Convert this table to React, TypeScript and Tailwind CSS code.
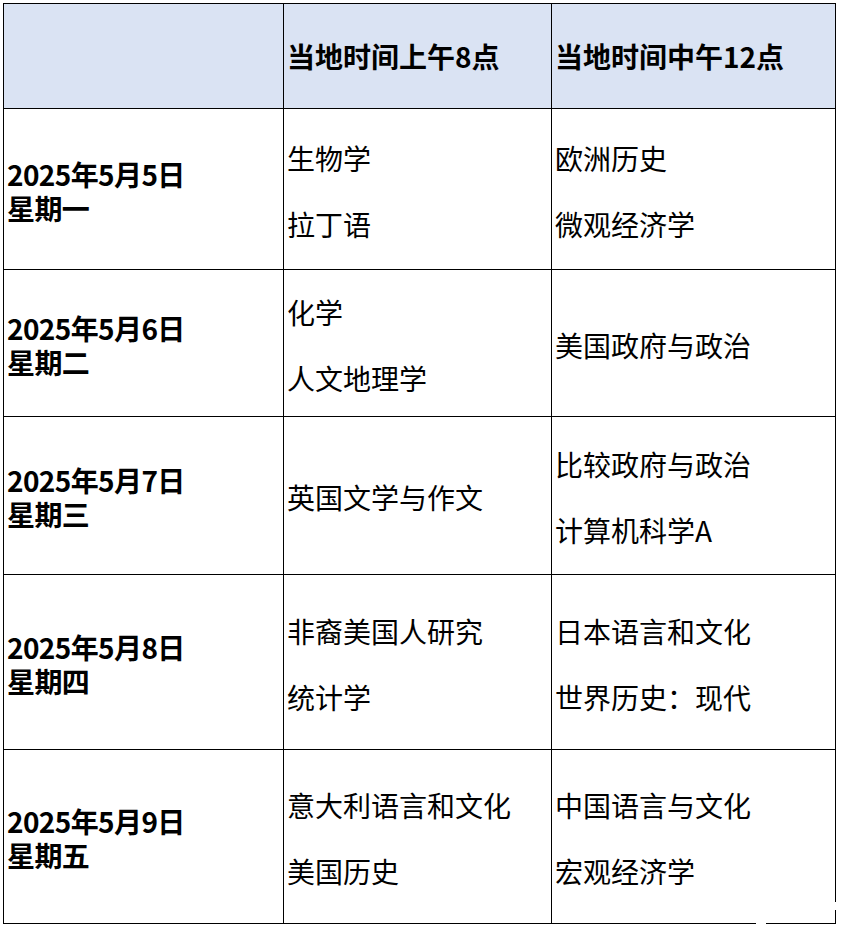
import React from 'react';

type Row = { date: string; day: string; am: string[]; noon: string[]; h: string };

const rows: Row[] = [
  { date: '2025年5月5日', day: '星期一', am: ['生物学', '拉丁语'], noon: ['欧洲历史', '微观经济学'], h: 'h-[161px]' },
  { date: '2025年5月6日', day: '星期二', am: ['化学', '人文地理学'], noon: ['美国政府与政治'], h: 'h-[147px]' },
  { date: '2025年5月7日', day: '星期三', am: ['英国文学与作文'], noon: ['比较政府与政治', '计算机科学A'], h: 'h-[158px]' },
  { date: '2025年5月8日', day: '星期四', am: ['非裔美国人研究', '统计学'], noon: ['日本语言和文化', '世界历史：现代'], h: 'h-[175px]' },
  { date: '2025年5月9日', day: '星期五', am: ['意大利语言和文化', '美国历史'], noon: ['中国语言与文化', '宏观经济学'], h: 'h-[174px]' },
];

function Lines({ items }: { items: string[] }) {
  return (
    <div className="flex flex-col gap-[32px]">
      {items.map(t => (
        <div key={t} className="leading-[34px] whitespace-nowrap">{t}</div>
      ))}
    </div>
  );
}

export default function App() {
  return (
    <div
      className="min-h-[932px] bg-white pt-[3px] pl-[3px] text-black text-[28px]"
      style={{ fontFamily: '"Noto Sans CJK SC", "Noto Sans", sans-serif' }}
    >
      <div className="relative w-[833px] border-l border-t border-black">
        {/* header */}
        <div className="flex h-[105px] bg-[#dae3f3]">
          <div className="w-[280px] border-r border-b border-black" />
          <div className="w-[268px] border-r border-b border-black flex items-center pl-[3px] font-bold">
            当地时间上午8点
          </div>
          <div className="w-[284px] border-r border-b border-black flex items-center pl-[3px] font-bold">
            当地时间中午12点
          </div>
        </div>

        {rows.map(r => (
          <div key={r.date} className={`flex ${r.h}`}>
            <div className="w-[280px] border-r border-b border-black flex items-center pl-[3px] pt-[3px] font-bold tracking-[-0.6px]">
              <div className="flex flex-col leading-[34px]">
                <span>{r.date}</span>
                <span>{r.day}</span>
              </div>
            </div>
            <div className="w-[268px] border-r border-b border-black flex items-center pl-[3px] pt-[3px]">
              <Lines items={r.am} />
            </div>
            <div className="w-[284px] border-r border-b border-black flex items-center pl-[3px] pt-[3px]">
              <Lines items={r.noon} />
            </div>
          </div>
        ))}

        {/* small gap in the bottom rule, as in the capture */}
        <div className="absolute bottom-0 left-[752px] h-px w-[10px] bg-white" />
        <div className="absolute bottom-[14px] right-0 h-[8px] w-px bg-white" />
      </div>
    </div>
  );
}
